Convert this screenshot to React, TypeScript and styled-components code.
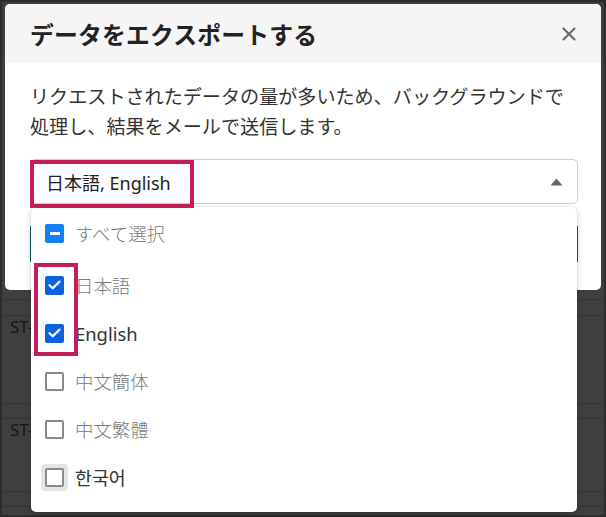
import styled, { createGlobalStyle } from 'styled-components';

const GlobalStyle = createGlobalStyle`
  * { box-sizing: border-box; }
  body {
    margin: 0;
    font-family: 'Noto Sans', 'Noto Sans CJK JP', sans-serif;
    background: #2e2e2e;
  }
`;

const Screen = styled.div`
  position: relative;
  width: 606px;
  height: 517px;
  overflow: hidden;
  border: 2px solid #2c2c2c;
  background: #3f3f3f;
`;

const Table = styled.div`
  display: flex;
  flex-direction: column;
  padding-top: 282px;
`;

const Row = styled.div<{ $h: number }>`
  height: ${(p) => p.$h}px;
  border-bottom: 1px solid #333;
  padding: 0 8px;
  font-size: 17px;
  line-height: 22px;
  color: #151515;
`;

const Modal = styled.div`
  position: absolute;
  top: 2px;
  left: 3px;
  width: 596px;
  height: 286px;
  background: #fff;
  border-radius: 5px;
`;

const Header = styled.div`
  height: 59px;
  display: flex;
  align-items: center;
  justify-content: space-between;
  padding: 0 24px 0 25px;
  background: #f5f5f5;
  border-radius: 5px 5px 0 0;
`;

const Title = styled.h2`
  margin: 0;
  font-family: 'Noto Sans CJK JP', sans-serif;
  font-size: 23.8px;
  font-weight: 700;
  color: #222;
  letter-spacing: 0.2px;
`;

const Close = styled.button`
  border: none;
  background: none;
  padding: 0;
  display: flex;
  cursor: pointer;
`;

const Body = styled.div`
  padding: 18px 20px 0 25px;
`;

const Lead = styled.p`
  margin: 0 0 18px;
  font-family: 'Noto Sans CJK JP', sans-serif;
  font-size: 19.1px;
  line-height: 30px;
  color: #333;
  white-space: nowrap;
`;

const SelectWrap = styled.div`
  position: relative;
  width: 548px;
`;

const SelectBox = styled.div`
  height: 45px;
  border: 1px solid #d0d0d0;
  border-radius: 5px;
  display: flex;
  align-items: center;
  justify-content: space-between;
  padding: 0 14px 0 15px;
  font-size: 18px;
  color: #222;
`;

const ExportButton = styled.div`
  margin-top: 20px;
  height: 40px;
  border-radius: 4px;
  background: #0f5a5a;
`;

const Menu = styled.ul`
  position: absolute;
  top: 48px;
  left: 1px;
  width: 546px;
  height: 305px;
  margin: 0;
  padding: 2px 0 0 14px;
  list-style: none;
  background: #fff;
  border-radius: 5px;
  box-shadow: 0 2px 6px rgba(0, 0, 0, 0.18), 0 0 1px rgba(0, 0, 0, 0.25);
  z-index: 2;
`;

const Item = styled.li<{ $gap?: boolean }>`
  height: 48px;
  display: flex;
  align-items: center;
  gap: 11px;
  margin-bottom: ${(p) => (p.$gap ? 4 : 0)}px;
`;

const Label = styled.span<{ $dark?: boolean }>`
  font-size: 18.4px;
  color: ${(p) => (p.$dark ? '#333' : '#7a7a7a')};
  font-weight: ${(p) => (p.$dark ? 400 : 300)};
`;

const Box = styled.span<{ $state: 'on' | 'off' | 'mixed' }>`
  width: 19px;
  height: 19px;
  border-radius: 2px;
  display: flex;
  align-items: center;
  justify-content: center;
  flex-shrink: 0;
  background: ${(p) => (p.$state === 'off' ? '#fff' : p.$state === 'mixed' ? '#1380f5' : '#0b62e0')};
  border: ${(p) => (p.$state === 'off' ? '2px solid #8a8a8a' : 'none')};
`;

const Halo = styled.span`
  margin-left: -4px;
  margin-right: -4px;
  padding: 4px;
  border-radius: 4px;
  background: #e4e4e4;
  display: flex;
`;

const Dash = styled.span`
  width: 10px;
  height: 3px;
  background: #fff;
`;

const Marker = styled.div`
  position: absolute;
  border: 4px solid #c31d5a;
  pointer-events: none;
  z-index: 5;
`;

const Check = () => (
  <svg width="13" height="10" viewBox="0 0 13 10">
    <path d="M1.5 5.2 L4.8 8.3 L11.5 1.6" fill="none" stroke="#fff" strokeWidth="2.2" strokeLinecap="round" strokeLinejoin="round" />
  </svg>
);

const options = [
  { label: '日本語', state: 'on', dark: false },
  { label: 'English', state: 'on', dark: true },
  { label: '中文簡体', state: 'off', dark: false },
  { label: '中文繁體', state: 'off', dark: false },
] as const;

export default function App() {
  return (
    <>
      <GlobalStyle />
      <Screen>
        <Table>
          <Row $h={16} />
          <Row $h={16} />
          <Row $h={88}>ST-</Row>
          <Row $h={15} />
          <Row $h={73}>ST-</Row>
          <Row $h={15} />
        </Table>

        <Modal>
          <Header>
            <Title>データをエクスポートする</Title>
            <Close aria-label="close">
              <svg width="16" height="16" viewBox="0 0 16 16">
                <path d="M2.5 2.5 L13.5 13.5 M13.5 2.5 L2.5 13.5" stroke="#6b6b6b" strokeWidth="2.2" strokeLinecap="round" />
              </svg>
            </Close>
          </Header>
          <Body>
            <Lead>
              リクエストされたデータの量が多いため、バックグラウンドで
              <br />
              処理し、結果をメールで送信します。
            </Lead>
            <SelectWrap>
              <SelectBox>
                <span>日本語, English</span>
                <svg width="13" height="8" viewBox="0 0 13 8">
                  <path d="M6.5 0.5 L12.5 7.5 L0.5 7.5 Z" fill="#666" />
                </svg>
              </SelectBox>
              <ExportButton />
              <Menu>
                <Item $gap>
                  <Box $state="mixed">
                    <Dash />
                  </Box>
                  <Label>すべて選択</Label>
                </Item>
                {options.map((o) => (
                  <Item key={o.label}>
                    <Box $state={o.state}>{o.state === 'on' && <Check />}</Box>
                    <Label $dark={o.dark}>{o.label}</Label>
                  </Item>
                ))}
                <Item>
                  <Halo>
                    <Box $state="off" />
                  </Halo>
                  <Label $dark>한국어</Label>
                </Item>
              </Menu>
            </SelectWrap>
          </Body>
        </Modal>

        <Marker style={{ left: 28, top: 158, width: 164, height: 48 }} />
        <Marker style={{ left: 32, top: 261, width: 44, height: 93 }} />
      </Screen>
    </>
  );
}
